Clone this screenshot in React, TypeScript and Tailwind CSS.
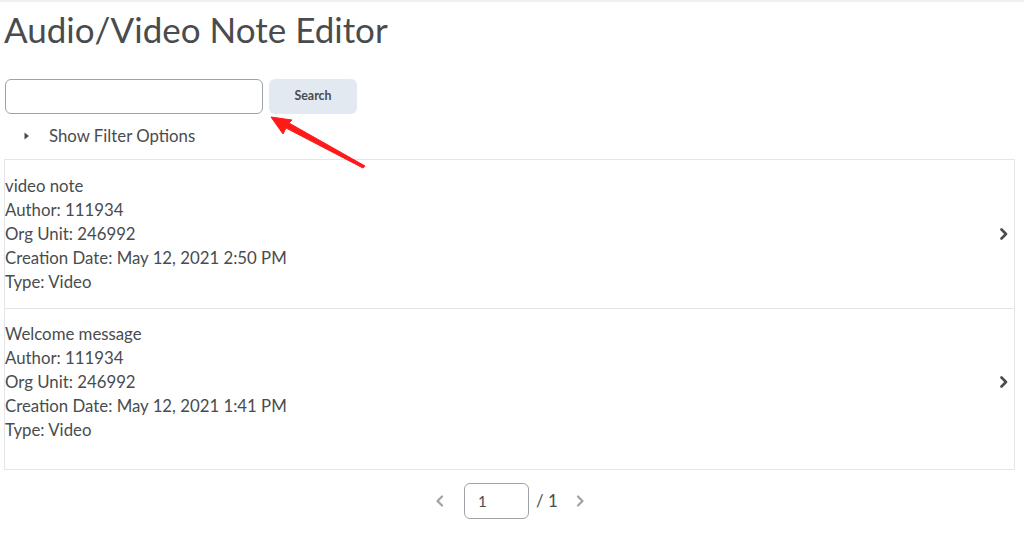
import React from "react";

const font = { fontFamily: "Lato, 'Noto Sans', sans-serif" };

function Item({ lines, pad }: { lines: string[]; pad: string }) {
  return (
    <div className={`flex items-center ${pad}`}>
      <div className="flex-1 text-[16.8px] leading-[24px] text-[#494c4e]">
        {lines.map((l) => (
          <div key={l}>{l}</div>
        ))}
      </div>
      <svg width="10" height="12" viewBox="0 0 10 12" className="mr-[5px]">
        <path d="M2.5 1.5 L7 6 L2.5 10.5" fill="none" stroke="#494c4e" strokeWidth="2.6" strokeLinecap="round" strokeLinejoin="round" />
      </svg>
    </div>
  );
}

export default function App() {
  return (
    <div className="relative w-[1024px] h-[537px] bg-white overflow-hidden" style={font}>
      <div className="h-[3px] border-t-2 border-[#f0f0f0]" />
      <div className="pl-[4px] pr-[9px]">
        <h1 className="mt-[6px] text-[35px] leading-[40px] text-[#494c4e] font-normal">Audio/Video Note Editor</h1>
        <div className="mt-[30px] flex gap-[6px] pl-px">
          <div className="w-[258px] h-[35px] rounded-[6px] border border-[#9ea3a7] bg-white" />
          <button className="w-[88px] h-[35px] pb-px rounded-[6px] bg-[#e3e9f1] text-[12.4px] font-bold text-[#494c4e]">Search</button>
        </div>
        <div className="mt-[10px] flex items-center h-[24px]">
          <svg width="6" height="8" viewBox="0 0 6 8" className="ml-[20px]">
            <path d="M0.5 0.5 L5 4 L0.5 7.5 Z" fill="#494c4e" />
          </svg>
          <span className="ml-[19px] text-[16.8px] text-[#494c4e]">Show Filter Options</span>
        </div>
        <div className="mt-[11px] border border-[#e3e5e8]">
          <Item pad="pt-[14px] pb-[14px]" lines={["video note", "Author: 111934", "Org Unit: 246992", "Creation Date: May 12, 2021 2:50 PM", "Type: Video"]} />
          <div className="border-t border-[#e3e5e8]" />
          <Item pad="pt-[13px] pb-[27px]" lines={["Welcome message", "Author: 111934", "Org Unit: 246992", "Creation Date: May 12, 2021 1:41 PM", "Type: Video"]} />
        </div>
        <div className="mt-[13px] flex items-center pl-[431px]">
          <svg width="10" height="12" viewBox="0 0 10 12">
            <path d="M7 1.5 L2.5 6 L7 10.5" fill="none" stroke="#9ea3a7" strokeWidth="2.2" strokeLinecap="round" strokeLinejoin="round" />
          </svg>
          <div className="ml-[19px] w-[65px] h-[36px] rounded-[6px] border border-[#9ea3a7] flex items-center pl-[13px] text-[15px] text-[#494c4e]">1</div>
          <span className="ml-[7px] text-[16.8px] text-[#494c4e]">/ 1</span>
          <svg width="10" height="12" viewBox="0 0 10 12" className="ml-[17px]">
            <path d="M3 1.5 L7.5 6 L3 10.5" fill="none" stroke="#9ea3a7" strokeWidth="2.2" strokeLinecap="round" strokeLinejoin="round" />
          </svg>
        </div>
      </div>
      <svg className="absolute left-0 top-0 pointer-events-none" width="1024" height="537">
        <path d="M365 166 L289 123 L292 120 L271 117 L283 134 L286 128 L363 168 Z" fill="#ff1a1a" stroke="#ff1a1a" strokeWidth="1" strokeLinejoin="round" />
      </svg>
    </div>
  );
}
